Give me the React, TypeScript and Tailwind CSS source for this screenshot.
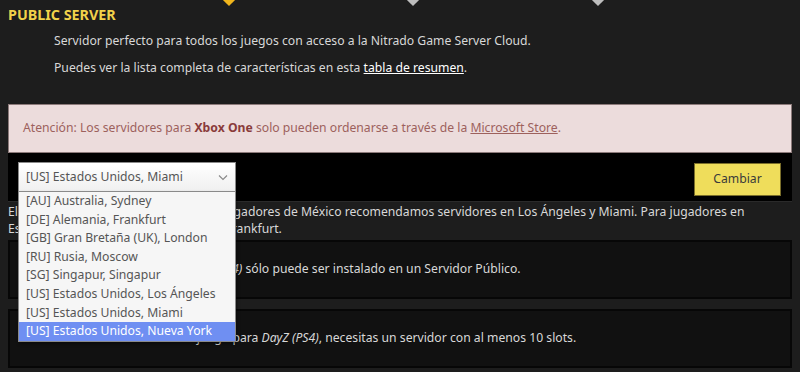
import React from "react";

const items = [
  "[AU] Australia, Sydney",
  "[DE] Alemania, Frankfurt",
  "[GB] Gran Bretaña (UK), London",
  "[RU] Rusia, Moscow",
  "[SG] Singapur, Singapur",
  "[US] Estados Unidos, Los Ángeles",
  "[US] Estados Unidos, Miami",
  "[US] Estados Unidos, Nueva York",
];

export default function App() {
  return (
    <div
      className="w-[800px] h-[372px] overflow-hidden bg-[#1d1d1d] text-[12.2px] text-[#d8d8d8] relative"
      style={{ fontFamily: '"Noto Sans", "Open Sans", sans-serif' }}
    >
      {/* top step diamonds */}
      <div className="absolute left-[224px] top-[-6px] w-[10px] h-[10px] rotate-45 bg-[#f0b51c]" />
      <div className="absolute left-[408px] top-[-6px] w-[10px] h-[10px] rotate-45 bg-[#bdbdbd]" />
      <div className="absolute left-[593px] top-[-6px] w-[10px] h-[10px] rotate-45 bg-[#bdbdbd]" />

      <div className="px-[8px] pt-[4px]">
        <h2 className="text-[14.3px] font-bold text-[#f1d24a] leading-[22px]">PUBLIC SERVER</h2>
        <div className="pl-[46px] pt-[6px]">
          <p className="leading-[18px]">Servidor perfecto para todos los juegos con acceso a la Nitrado Game Server Cloud.</p>
          <p className="leading-[18px] mt-[9px]">
            Puedes ver la lista completa de características en esta{" "}
            <span className="underline text-white">tabla de resumen</span>.
          </p>
        </div>

        <div className="mt-[27px] border border-[#8c7a7a] bg-[#ecdcdc] h-[49px] flex items-center px-[14px] text-[#9d615d]">
          <span>
            Atención: Los servidores para <b className="text-[#8a3b3b]">Xbox One</b> solo pueden ordenarse a través de la{" "}
            <span className="underline">Microsoft Store</span>.
          </span>
        </div>

        <div className="bg-black h-[49px] flex items-center justify-between pl-[10px] pr-[11px] border-b border-[#2a2a2a]">
          <div className="relative w-[218px] h-[30px]">
            <div className="w-full h-full border border-[#8a8a8a] bg-gradient-to-b from-white to-[#f0f0f0] flex items-center justify-between px-[7px] text-[#555]">
              <span>[US] Estados Unidos, Miami</span>
              <svg width="10" height="7" viewBox="0 0 10 7">
                <path d="M1 1.5 L5 5.5 L9 1.5" fill="none" stroke="#888" strokeWidth="1.1" />
              </svg>
            </div>
            <div className="absolute left-0 top-[29px] w-[218px] bg-[#f6f6f6] border border-[#8a8a8a] shadow-[1px_2px_3px_rgba(0,0,0,0.4)] z-10">
              {items.map((it, i) => (
                <div
                  key={it}
                  className={
                    i === 7
                      ? "h-[18.6px] leading-[18.6px] px-[7px] whitespace-nowrap bg-[#6f8ff2] text-white"
                      : "h-[18.6px] leading-[18.6px] px-[7px] whitespace-nowrap text-[#555]"
                  }
                >
                  {it}
                </div>
              ))}
            </div>
          </div>
          <button className="w-[87px] h-[33px] mt-[4px] bg-[#efdd5b] border border-[#7a6e2a] text-[#3a3a3a]">
            Cambiar
          </button>
        </div>

        <p className="leading-[17px] mt-[1px]">
          El ping varía según la ubicación. Para jugadores de México recomendamos servidores en Los Ángeles y Miami. Para
          jugadores en
          <br />
          España recomendamos servidores en Frankfurt.
        </p>

        <div className="mt-[3px] h-[59px] bg-[#111] border-2 border-[#070707] flex items-center px-[18px]">
          <span>
            Ten en cuenta que el juego <i>DayZ (PS4)</i> sólo puede ser instalado en un Servidor Público.
          </span>
        </div>

        <div className="mt-[10px] h-[59px] bg-[#111] border-2 border-[#070707] flex items-center px-[18px]">
          <span>
            Para comenzar a construir tu juego para <i>DayZ (PS4)</i>, necesitas un servidor con al menos 10 slots.
          </span>
        </div>
      </div>
    </div>
  );
}
